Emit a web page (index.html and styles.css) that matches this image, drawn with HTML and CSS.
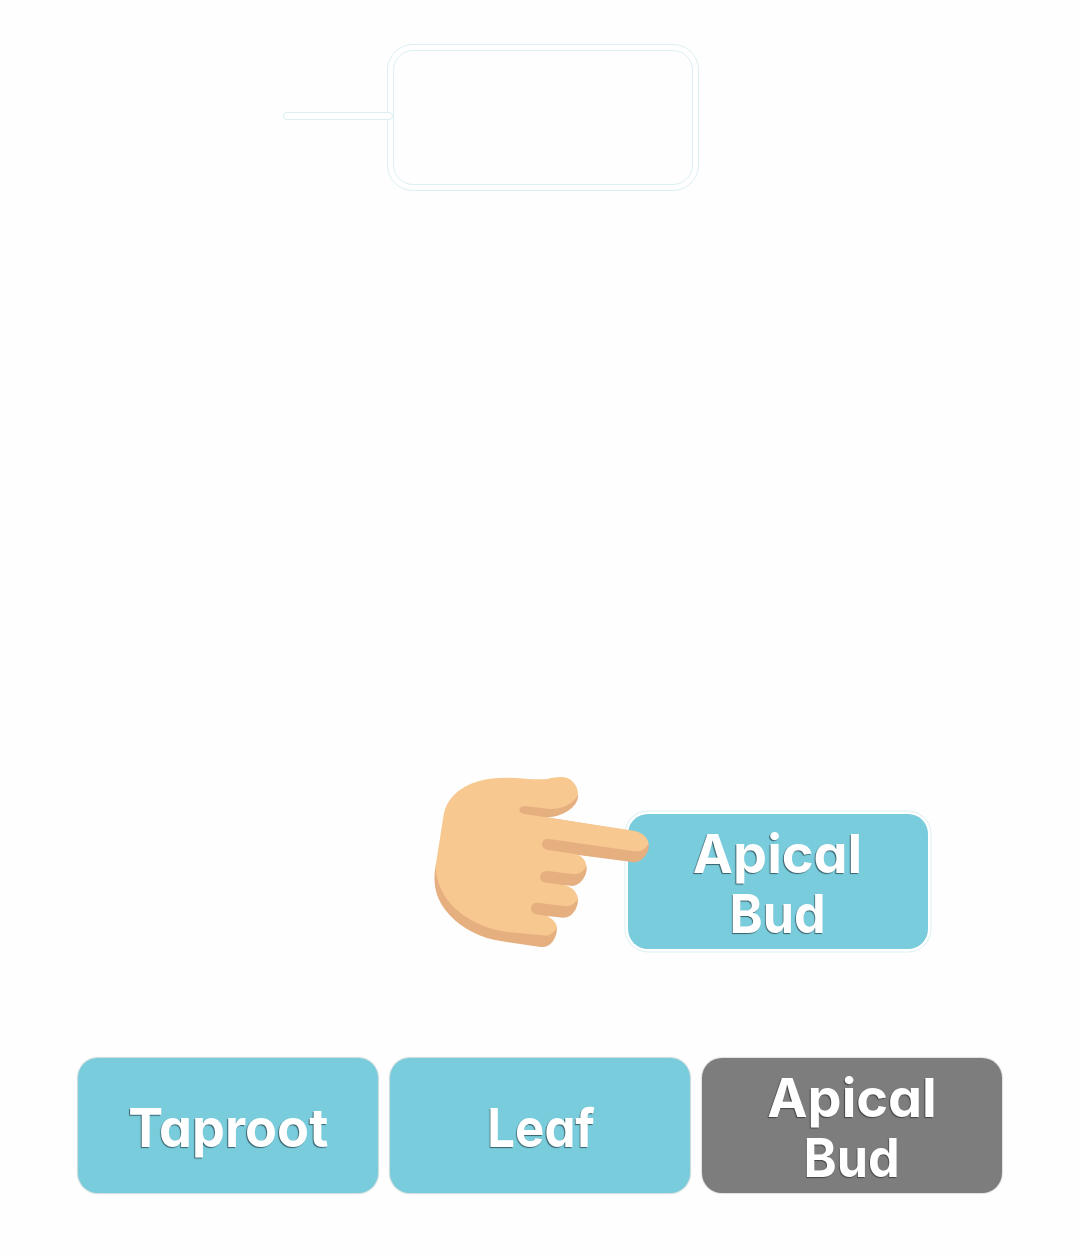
FILE: index.html
```html
<!DOCTYPE html>
<html lang="en">
<head>
<meta charset="utf-8">
<title>Label the plant</title>
<link rel="stylesheet" href="styles.css">
</head>
<body>
<main class="activity">
  <div class="target">
    <span class="pointer"></span>
    <div class="drop-zone"></div>
  </div>
  <div class="card dragged">
    <span class="word apical">Apical</span>
    <span class="word bud">Bud</span>
    <svg class="hand" viewBox="0 0 720 585" aria-hidden="true">
      <path class="shade" d="M90 220 L47 302 C38 350 45 395 76 435 C111 480 165 513 222 524 C270 534 323 540 363 546 C391 549 411 520 411 488 L380 453 L430 458 C455 459 475 430 474 402 L433 361 L459 363 C481 361 503 331 500 305 L469 269 L636 291 C665 296 689 265 686 237 L640 199 L378 157 C425 157 478 126 474 88 L300 120 Z"/>
      <path class="skin" d="M47 302 L70 156 C79 84 151 38 255 38 C305 38 347 46 381 42 C407 35 434 33 448 42 C465 52 475 72 474 89 C459 120 420 135 381 131 L323 124 C307 121 298 127 298 135 C299 143 308 147 318 148 L378 157 L641 197 C666 201 683 216 686 236 C677 252 663 262 638 258 L388 222 C375 219 366 229 366 239 C367 248 374 253 385 255 L469 268 C489 274 500 292 499 305 C490 320 476 329 459 327 L383 318 C370 316 360 325 360 337 C360 347 368 352 378 353 L433 361 C459 366 472 384 474 402 C466 416 449 426 433 423 L351 413 C340 413 332 422 333 432 C334 441 341 447 350 448 L380 453 C398 460 410 475 411 488 C401 504 388 514 370 511 L285 503 C227 498 182 485 133 452 C78 415 48 360 47 302 Z"/>
    </svg>
  </div>
  <div class="tray">
    <div class="card"><span class="word taproot">Taproot</span></div>
    <div class="card"><span class="word leaf">Leaf</span></div>
    <div class="card used"><span class="word apical">Apical</span><span class="word bud">Bud</span></div>
  </div>
</main>
</body>
</html>
```
FILE: styles.css
```css
*, *::before { box-sizing: border-box; }
body { margin: 0; background: #fefefe; }
.activity {
  display: flex;
  flex-direction: column;
  height: 1257px;
  padding: 44px 78px 64px;
  font-family: Inter, "Liberation Sans", sans-serif;
}
.target {
  display: flex;
  align-items: center;
  width: 621px;
  height: 147px;
  padding-left: 205px;
}
.pointer {
  z-index: 1;
  width: 110px;
  height: 8px;
  margin: 0 -6px 4px 0;
  border: 1px solid #dceff2;
  border-radius: 4px;
  background: #fff;
}
.drop-zone {
  width: 312px;
  height: 147px;
  padding: 5px;
  border: 1px solid #dceff2;
  border-radius: 26px;
  background: #fff;
}
.drop-zone::before {
  content: "";
  display: block;
  height: 135px;
  border: 1px solid #dceff2;
  border-radius: 20px;
  background: #fefefe;
}
.card {
  display: flex;
  flex-direction: column;
  align-items: center;
  justify-content: center;
  width: 300px;
  height: 135px;
  padding-top: 4px;
  border-radius: 20px;
  background: #79ccdc;
  box-shadow: 0 0 1px 1px #ccd9dc;
}
.dragged {
  position: relative;
  margin: 623px 0 0 549.5px;
  box-shadow: 0 0 0 2.5px #fff, 0 0 0 3.5px #dceff2;
}
.tray {
  display: flex;
  gap: 12px;
  margin-top: auto;
}
.used { background: #7d7d7d; box-shadow: 0 0 1px 1px #e0e0e0; }
.word {
  color: #fff;
  font-size: 54px;
  font-weight: 700;
  font-feature-settings: "cv11" 1;
  line-height: 60px;
  text-shadow: -1px 1px 1px #39626b;
  white-space: nowrap;
}
.taproot { transform: scaleX(.968); }
.leaf { transform: translateX(1px) scaleX(.91); }
.bud { transform: scaleX(.93); }
.used .word { text-shadow: -1px 1px 1px #444; }
.hand {
  position: absolute;
  left: -207.5px;
  top: -49px;
  width: 240px;
  height: 195px;
}
.skin { fill: #f7c890; }
.shade { fill: #e6af80; }
```
